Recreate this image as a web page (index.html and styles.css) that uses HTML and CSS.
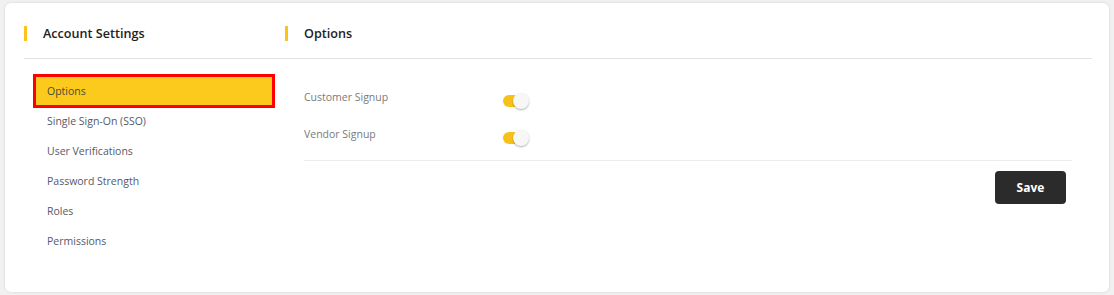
FILE: index.html
```html
<!DOCTYPE html>
<html lang="en">
<head>
  <meta charset="UTF-8">
  <meta name="viewport" content="width=device-width, initial-scale=1.0">
  <title>Account Settings</title>
  <link rel="stylesheet" href="styles.css">
</head>

<body>
  <div class="card">
    <div class="card-head">
      <div class="head-left">
        <h2 class="section-title">Account Settings</h2>
      </div>
      <div class="head-right">
        <h2 class="section-title">Options</h2>
      </div>
    </div>

    <div class="card-body">
      <!-- Settings menu -->
      <div class="side-col">
        <ul class="side-menu">
          <li class="active">Options</li>
          <li>Single Sign-On (SSO)</li>
          <li>User Verifications</li>
          <li>Password Strength</li>
          <li>Roles</li>
          <li>Permissions</li>
        </ul>
      </div>

      <!-- Options panel -->
      <div class="options-panel">
        <div class="option-list">
          <div class="option-row">
            <span class="option-label">Customer Signup</span>
            <span class="switch on"><span class="track"></span><span class="knob"></span></span>
          </div>
          <div class="option-row">
            <span class="option-label">Vendor Signup</span>
            <span class="switch on"><span class="track"></span><span class="knob"></span></span>
          </div>
        </div>
        <div class="panel-actions">
          <button class="btn-save">Save</button>
        </div>
      </div>
    </div>
  </div>
</body>

</html>
```

FILE: styles.css
```css
body {
  margin: 0;
  padding: 3px 5px;
  font-family: "Open Sans", Arial, sans-serif;
  background-color: #f1f1f1;
  color: #333;
}

.card {
  width: 1104px;
  height: 289px;
  box-sizing: border-box;
  padding: 0 17px 0 19px;
  background-color: #fff;
  border-radius: 6px;
  box-shadow: 0 0 3px rgba(0, 0, 0, 0.12);
}

.card-head {
  display: flex;
  height: 56px;
  box-sizing: border-box;
  padding-top: 23px;
  border-bottom: 1px solid #e2e2e2;
}

.head-left {
  width: 261px;
}

.section-title {
  margin: 0;
  padding-left: 16px;
  border-left: 3px solid #fcc419;
  font-size: 12.6px;
  font-weight: 600;
  line-height: 15px;
  color: #222;
}

.card-body {
  display: flex;
  padding-top: 17px;
}

.side-col {
  width: 261px;
}

/* Menu */
.side-menu {
  list-style: none;
  margin: 0 0 0 11px;
  padding: 0;
  width: 238px;

  li {
    height: 30px;
    line-height: 30px;
    padding-left: 12px;
    font-size: 10.5px;
    color: #585866;
  }

  li.active {
    background-color: #fcca1c;
    outline: 3px solid #f00;
    outline-offset: -1px;
    color: #4a4a3a;
  }
}

.options-panel {
  flex: 1;
  padding: 0 20px 0 19px;
}

.option-list {
  padding: 13px 0 14px;
  border-bottom: 1px solid #ececec;
  display: flex;
  flex-direction: column;
  gap: 17px;
}

.option-row {
  display: flex;
  align-items: flex-start;
}

.option-label {
  width: 199px;
  font-size: 10.5px;
  line-height: 16px;
  color: #7a7a7a;
}

/* Toggle switch */
.switch {
  position: relative;
  display: inline-block;
  width: 26px;
  height: 16px;
  margin-top: 4px;

  .track {
    position: absolute;
    left: 0;
    top: 2px;
    width: 22px;
    height: 12px;
    border-radius: 6px;
    background-color: #f6c11a;
  }

  .knob {
    position: absolute;
    right: 0;
    top: 0;
    width: 16px;
    height: 16px;
    border-radius: 50%;
    background-color: #f7f7f7;
    box-shadow: 0 1px 2px rgba(0, 0, 0, 0.3);
  }
}

.panel-actions {
  display: flex;
  justify-content: flex-end;
  padding: 10px 6px 0 0;
}

.btn-save {
  width: 71px;
  height: 33px;
  border: none;
  border-radius: 4px;
  background-color: #2b2b2b;
  color: #fff;
  font-family: "Open Sans", Arial, sans-serif;
  font-size: 12px;
  font-weight: 700;
  cursor: pointer;
}
```
